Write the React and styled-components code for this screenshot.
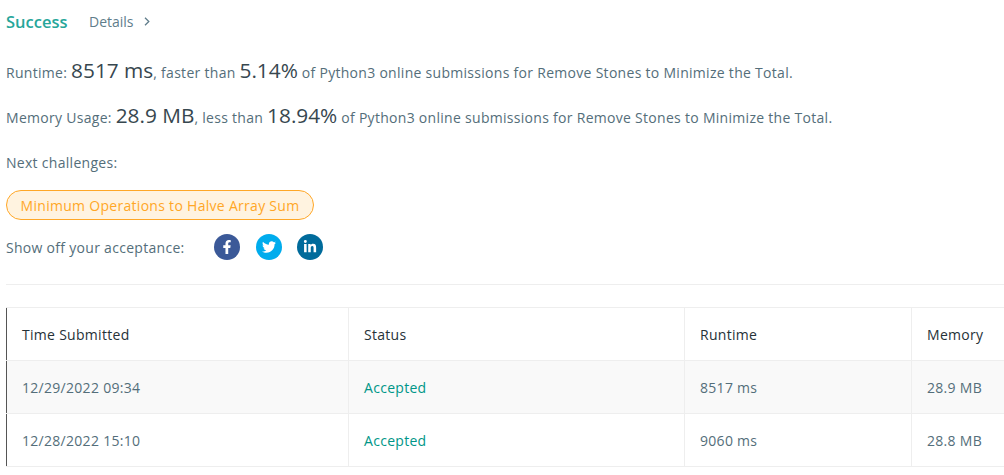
import React from 'react';
import styled, { createGlobalStyle } from 'styled-components';
import { FaFacebookF, FaTwitter, FaLinkedinIn } from 'react-icons/fa';

const GlobalStyle = createGlobalStyle`
  html, body {
    margin: 0;
    padding: 0;
    background: #fff;
    overflow: hidden;
  }
  body {
    font-family: "Open Sans", "Noto Sans", sans-serif;
    font-size: 14px;
    letter-spacing: 0.29px;
    color: #546e7a;
  }
`;

const Page = styled.div`
  width: 1004px;
  height: 475px;
  padding: 9px 0 0 6px;
  box-sizing: border-box;
  overflow: hidden;
`;

const Header = styled.div`
  display: flex;
  align-items: center;
  height: 25px;
`;

const Title = styled.span`
  font-size: 16.5px;
  font-weight: 600;
  letter-spacing: 0;
  color: #26a69a;
  width: 83px;
`;

const Details = styled.span`
  display: flex;
  align-items: center;
  gap: 10px;
  font-size: 14px;
  letter-spacing: 0;
  color: #607d8b;
`;

const Line = styled.div`
  display: flex;
  align-items: baseline;
  height: 30px;
  line-height: 30px;
  margin-top: ${p => p.$top}px;
  font-size: 14px;
  color: #546e7a;
  white-space: pre;
`;

const Big = styled.span`
  font-size: 20.8px;
  letter-spacing: 0;
  color: #37474f;
`;

const Next = styled.div`
  margin-top: 23px;
  height: 20px;
  line-height: 20px;
`;

const Pill = styled.div`
  display: inline-flex;
  align-items: center;
  justify-content: center;
  box-sizing: border-box;
  width: 308px;
  height: 30px;
  margin-top: 17px;
  border: 1px solid #ffa726;
  border-radius: 15px;
  background: #fff3e0;
  color: #ffa726;
  font-size: 14px;
`;

const ShareRow = styled.div`
  display: flex;
  align-items: center;
  height: 26px;
  margin-top: 14px;
`;

const ShareLabel = styled.span`
  width: 208px;
`;

const Socials = styled.div`
  display: flex;
  gap: 15.5px;
`;

const Social = styled.span`
  display: flex;
  align-items: center;
  justify-content: center;
  width: 26px;
  height: 26px;
  border-radius: 50%;
  background: ${p => p.$color};
  color: #fff;
  font-size: 14px;
`;

const Divider = styled.hr`
  margin: 24px 0 0;
  border: 0;
  border-top: 1px solid #eee;
`;

const Table = styled.table`
  margin-top: 22px;
  width: 1010px;
  table-layout: fixed;
  border-collapse: collapse;
  border-left: 1px solid #555;
  border-top: 1px solid #eee;
`;

const Cell = styled.td`
  height: 53px;
  padding: 0 0 0 15px;
  box-sizing: border-box;
  border-right: 1px solid #eee;
  border-bottom: 1px solid #eee;
  font-size: 14px;
  color: ${p => (p.$accepted ? '#009688' : '#546e7a')};
`;

const HeadCell = styled(Cell).attrs({ as: 'th' })`
  font-weight: 400;
  text-align: left;
  color: #263238;
`;

const Row = styled.tr`
  background: ${p => (p.$shaded ? '#f9f9f9' : '#fff')};
`;

const rows = [
  { time: '12/29/2022 09:34', status: 'Accepted', runtime: '8517 ms', memory: '28.9 MB', shaded: true },
  { time: '12/28/2022 15:10', status: 'Accepted', runtime: '9060 ms', memory: '28.8 MB', shaded: false },
];

export default function App() {
  return (
    <Page>
      <GlobalStyle />
      <Header>
        <Title>Success</Title>
        <Details>
          Details
          <svg width="6" height="9" viewBox="0 0 6 9" fill="none" stroke="#607d8b" strokeWidth="1.3">
            <path d="M1 .8 4.8 4.5 1 8.2" />
          </svg>
        </Details>
      </Header>
      <Line $top={21}>
        Runtime: <Big>8517 ms</Big>, faster than <Big>5.14%</Big> of Python3 online submissions for Remove Stones to Minimize the Total.
      </Line>
      <Line $top={15}>
        Memory Usage: <Big>28.9 MB</Big>, less than <Big>18.94%</Big> of Python3 online submissions for Remove Stones to Minimize the Total.
      </Line>
      <Next>Next challenges:</Next>
      <Pill>Minimum Operations to Halve Array Sum</Pill>
      <ShareRow>
        <ShareLabel>Show off your acceptance:</ShareLabel>
        <Socials>
          <Social $color="#3b5998"><FaFacebookF /></Social>
          <Social $color="#00aced"><FaTwitter /></Social>
          <Social $color="#006b9b"><FaLinkedinIn /></Social>
        </Socials>
      </ShareRow>
      <Divider />
      <Table>
        <colgroup>
          <col style={{ width: 342 }} />
          <col style={{ width: 336 }} />
          <col style={{ width: 227 }} />
          <col />
        </colgroup>
        <thead>
          <Row>
            <HeadCell>Time Submitted</HeadCell>
            <HeadCell>Status</HeadCell>
            <HeadCell>Runtime</HeadCell>
            <HeadCell>Memory</HeadCell>
          </Row>
        </thead>
        <tbody>
          {rows.map(r => (
            <Row key={r.time} $shaded={r.shaded}>
              <Cell>{r.time}</Cell>
              <Cell $accepted>{r.status}</Cell>
              <Cell>{r.runtime}</Cell>
              <Cell>{r.memory}</Cell>
            </Row>
          ))}
        </tbody>
      </Table>
    </Page>
  );
}
